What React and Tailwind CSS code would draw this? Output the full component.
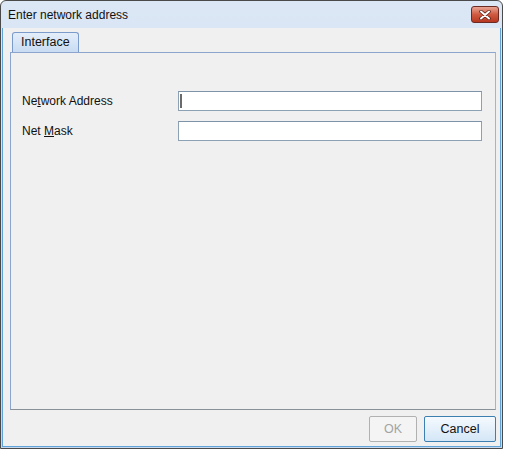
import React from 'react';

// Dialog "Enter network address" in a Vista-like frame
function CloseButton() {
    return (
        <div className="flex h-[17px] w-[28px] items-center justify-center rounded-[3px] border border-[#6b2a24] bg-gradient-to-b from-[#e8a493] via-[#cf5a41] to-[#b8361f]">
            <svg width="12" height="10" viewBox="0 0 12 10">
                <path d="M2 1.5 L10 8.5 M10 1.5 L2 8.5" stroke="#5a1c14" strokeWidth="3.4" strokeLinecap="round" />
                <path d="M2 1.5 L10 8.5 M10 1.5 L2 8.5" stroke="#ffffff" strokeWidth="2" strokeLinecap="round" />
            </svg>
        </div>
    );
}

function Field({ label, focused }) {
    return (
        <div className="flex h-[20px] items-center">
            <div className="w-[156px] text-[12px] text-[#111]">{label}</div>
            <div className="relative h-[20px] w-[304px] border border-[#8da1b5] border-t-[#7f93a8] bg-white">
                {focused && <div className="absolute left-[1px] top-[2px] h-[14px] w-[2px] bg-[#6a6a6a]" />}
            </div>
        </div>
    );
}

export default function App() {
    return (
        <div className="h-[451px] w-[506px] bg-white" style={{ fontFamily: '"Liberation Sans", Arial, sans-serif' }}>
            <div className="flex h-[449px] w-[503px] flex-col overflow-hidden rounded-t-[6px] border border-[#4a4a4a] bg-gradient-to-b from-[#dbe7f5] to-[#c6d8ee]">
                {/* Title bar */}
                <div className="flex h-[27px] shrink-0 items-center justify-between pl-[7px] pr-[3px]">
                    <span className="text-[12px] text-[#111]">Enter network address</span>
                    <CloseButton />
                </div>
                {/* Client area */}
                <div className="mx-[1px] mb-[1px] flex flex-1 flex-col border border-t-0 border-[#5fa3d8] bg-[#f0f0f0]">
                    <div className="flex flex-1 flex-col pl-[7px] pr-[4px] pt-[4px]">
                        {/* Tab */}
                        <div className="flex">
                            <div className="ml-[2px] flex h-[20px] items-center rounded-t-[3px] border border-b-0 border-[#7b9bcb] bg-gradient-to-b from-[#e4eefa] to-[#c9dcf3] px-[8px] text-[12.5px] text-[#111]">
                                Interface
                            </div>
                        </div>
                        {/* Tab panel */}
                        <div className="h-[358px] border border-[#8ca5ce] border-b-[#8a9098] border-r-[#a9b4c2] pl-[11px] pt-[38px]">
                            <div className="flex flex-col gap-[10px]">
                                <Field label={<span>Ne<span className="underline">t</span>work Address</span>} focused />
                                <Field label={<span>Net <span className="underline">M</span>ask</span>} />
                            </div>
                        </div>
                        {/* Buttons */}
                        <div className="flex justify-end gap-[7px] pt-[6px]">
                            <div className="flex h-[26px] w-[48px] items-center justify-center rounded-[2px] border border-[#b1b1b1] bg-[#f4f4f4] text-[12.5px] text-[#a3a3a3]">
                                OK
                            </div>
                            <div className="flex h-[26px] w-[72px] items-center justify-center rounded-[2px] border border-[#3c7fb1] bg-gradient-to-b from-[#f5fafe] to-[#d4e6f6] text-[12.5px] text-[#111]">
                                Cancel
                            </div>
                        </div>
                    </div>
                </div>
            </div>
        </div>
    );
}
